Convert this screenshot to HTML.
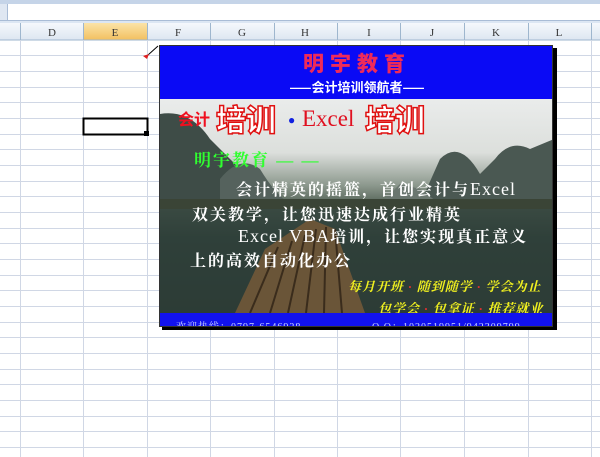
<!DOCTYPE html>
<html><head><meta charset="utf-8"><style>
body{margin:0;width:600px;height:457px;overflow:hidden;background:#fff;font-family:"Liberation Sans","Noto Sans CJK SC",sans-serif;position:relative}
.abs{position:absolute}
.cn{font-family:"Liberation Serif","Noto Serif CJK SC","Noto Sans CJK SC",serif;font-weight:bold;white-space:nowrap}
</style></head><body>
<div class="abs" style="left:0;top:0;width:600px;height:4px;background:#c5d4e8"></div>
<div class="abs" style="left:0;top:4px;width:600px;height:16px;background:#fff;border-bottom:1px solid #a9bcd6"></div>
<div class="abs" style="left:0;top:4px;width:7px;height:16px;background:#dfe7f2;border-right:1px solid #a9bcd6;font-size:8px;color:#555">&nbsp;</div>
<div class="abs" style="left:0;top:21px;width:600px;height:2px;background:#dce6f3"></div>
<svg class="abs" style="left:0;top:0" width="600" height="457">
<defs><linearGradient id="h" x1="0" y1="0" x2="0" y2="1"><stop offset="0" stop-color="#f5f8fc"/><stop offset="1" stop-color="#dde6f1"/></linearGradient>
<linearGradient id="hs" x1="0" y1="0" x2="0" y2="1"><stop offset="0" stop-color="#fbe3a8"/><stop offset="1" stop-color="#f2c060"/></linearGradient></defs>
<rect x="0" y="23" width="600" height="17" fill="url(#h)"/>
<rect x="84" y="23" width="63" height="17" fill="url(#hs)"/>
<line x1="0" y1="40" x2="600" y2="40" stroke="#9eb6ce"/>
<g stroke="#d0d7e5">
<line x1="0" y1="55.5" x2="600" y2="55.5"/><line x1="0" y1="71.5" x2="600" y2="71.5"/><line x1="0" y1="87.5" x2="600" y2="87.5"/><line x1="0" y1="102.5" x2="600" y2="102.5"/><line x1="0" y1="118.5" x2="600" y2="118.5"/><line x1="0" y1="134.5" x2="600" y2="134.5"/><line x1="0" y1="149.5" x2="600" y2="149.5"/><line x1="0" y1="165.5" x2="600" y2="165.5"/><line x1="0" y1="181.5" x2="600" y2="181.5"/><line x1="0" y1="196.5" x2="600" y2="196.5"/><line x1="0" y1="212.5" x2="600" y2="212.5"/><line x1="0" y1="228.5" x2="600" y2="228.5"/><line x1="0" y1="243.5" x2="600" y2="243.5"/><line x1="0" y1="259.5" x2="600" y2="259.5"/><line x1="0" y1="275.5" x2="600" y2="275.5"/><line x1="0" y1="290.5" x2="600" y2="290.5"/><line x1="0" y1="306.5" x2="600" y2="306.5"/><line x1="0" y1="322.5" x2="600" y2="322.5"/><line x1="0" y1="337.5" x2="600" y2="337.5"/><line x1="0" y1="353.5" x2="600" y2="353.5"/><line x1="0" y1="369.5" x2="600" y2="369.5"/><line x1="0" y1="384.5" x2="600" y2="384.5"/><line x1="0" y1="400.5" x2="600" y2="400.5"/><line x1="0" y1="416.5" x2="600" y2="416.5"/><line x1="0" y1="431.5" x2="600" y2="431.5"/><line x1="0" y1="447.5" x2="600" y2="447.5"/>
<line x1="20.5" y1="40" x2="20.5" y2="457"/><line x1="83.5" y1="40" x2="83.5" y2="457"/><line x1="147.5" y1="40" x2="147.5" y2="457"/><line x1="210.5" y1="40" x2="210.5" y2="457"/><line x1="274.5" y1="40" x2="274.5" y2="457"/><line x1="337.5" y1="40" x2="337.5" y2="457"/><line x1="400.5" y1="40" x2="400.5" y2="457"/><line x1="464.5" y1="40" x2="464.5" y2="457"/><line x1="528.5" y1="40" x2="528.5" y2="457"/><line x1="591.5" y1="40" x2="591.5" y2="457"/>
</g>
<g stroke="#9eb6ce">
<line x1="20.5" y1="23" x2="20.5" y2="40"/><line x1="83.5" y1="23" x2="83.5" y2="40"/><line x1="147.5" y1="23" x2="147.5" y2="40"/><line x1="210.5" y1="23" x2="210.5" y2="40"/><line x1="274.5" y1="23" x2="274.5" y2="40"/><line x1="337.5" y1="23" x2="337.5" y2="40"/><line x1="400.5" y1="23" x2="400.5" y2="40"/><line x1="464.5" y1="23" x2="464.5" y2="40"/><line x1="528.5" y1="23" x2="528.5" y2="40"/><line x1="591.5" y1="23" x2="591.5" y2="40"/>
</g>
<g font-family="Liberation Serif" font-size="11" fill="#333" text-anchor="middle">
<text x="52" y="36">D</text><text x="115" y="36">E</text><text x="178" y="36">F</text><text x="242" y="36">G</text><text x="305" y="36">H</text><text x="369" y="36">I</text><text x="432" y="36">J</text><text x="496" y="36">K</text><text x="559" y="36">L</text>
</g>
<rect x="83.5" y="118.5" width="64" height="16" fill="none" stroke="#000" stroke-width="2"/>
<rect x="144" y="131" width="5" height="5" fill="#000"/>
<path d="M148 55 L158 46" stroke="#000" stroke-width="1" fill="none"/>
<path d="M143 56 L149 54 L147 59 Z" fill="#e02020"/>
</svg>
<div class="abs" style="left:162px;top:48px;width:395px;height:282px;background:#000"></div>
<div class="abs" style="left:159px;top:45px;width:394px;height:282px;overflow:hidden;border:1px solid #333;box-sizing:border-box">
<div class="abs" style="left:0;top:0;width:394px;height:53px;background:#0a0af5"></div>
<div class="abs cn" style="left:0;top:2px;width:394px;text-align:center;color:#ee2a5a;font-size:21px;letter-spacing:6px;font-family:'Noto Sans CJK SC',sans-serif;font-weight:900">明宇教育</div>
<div class="abs" style="left:0;top:31px;width:394px;text-align:center;color:#fff;font-size:13px;font-weight:bold;font-family:'Noto Sans CJK SC',sans-serif;white-space:nowrap">——会计培训领航者——</div>
<div class="abs" style="left:0;top:53px;width:394px;height:214px;background:linear-gradient(180deg,#eaeceb 0%,#dcdfdc 25%,#8e9a8f 40%,#4f5e52 50%,#33443c 65%,#2c3a33 100%)"></div>
<svg class="abs" style="left:0;top:53px" width="394" height="214">
<path d="M0 15 Q30 10 50 40 L80 70 Q100 90 120 105 L0 105Z" fill="#3e4c47"/>
<path d="M60 80 Q80 55 100 70 Q115 95 130 105 L60 105Z" fill="#55625d"/>
<path d="M260 105 L280 60 Q300 40 320 75 L335 60 Q350 40 370 50 L394 40 L394 105Z" fill="#4a5852"/>
<path d="M220 105 L240 85 L260 90 L280 105Z" fill="#6a766f"/>
<rect x="0" y="100" width="394" height="10" fill="#3a4436"/>
<path d="M0 110 L394 110 L394 214 L0 214Z" fill="#2d3d39" opacity=".6"/>
<path d="M75 214 L105 150 L150 120 L175 130 L205 214Z" fill="#6a5538"/>
<g stroke="#3a2c1c" stroke-width="2"><line x1="90" y1="214" x2="118" y2="148"/><line x1="110" y1="214" x2="132" y2="142"/><line x1="128" y1="214" x2="145" y2="136"/><line x1="146" y1="214" x2="156" y2="130"/><line x1="164" y1="214" x2="166" y2="128"/><line x1="182" y1="214" x2="175" y2="130"/></g>
</svg>
<div class="abs cn" style="left:18px;top:60px;color:#f01020;font-size:16px;font-family:'Noto Sans CJK SC',sans-serif">会计</div>
<div class="abs cn" style="left:56px;top:50px;color:#fff;-webkit-text-stroke:1.5px #e01010;font-size:30px;font-family:'Noto Sans CJK SC',sans-serif;font-weight:900">培训</div>
<div class="abs" style="left:128px;top:67px;color:#1020e0;font-size:12px">●</div>
<div class="abs" style="left:142px;top:60px;color:#e01020;font-size:23px;font-family:'Liberation Serif',serif">Excel</div>
<div class="abs cn" style="left:205px;top:50px;color:#fff;-webkit-text-stroke:1.5px #e01010;font-size:30px;font-family:'Noto Sans CJK SC',sans-serif;font-weight:900">培训</div>
<div class="abs cn" style="left:34px;top:100px;color:#30ff30;font-size:17px;letter-spacing:2px">明宇教育 — —</div>
<div class="abs cn" style="left:76px;top:131px;color:#fff;font-size:16px;letter-spacing:2px">会计精英的摇篮，首创会计与<span style="font-weight:normal;font-size:18px;letter-spacing:1px">Excel</span></div>
<div class="abs cn" style="left:32px;top:156px;color:#fff;font-size:16px;letter-spacing:2px">双关教学，让您迅速达成行业精英</div>
<div class="abs cn" style="left:78px;top:178px;color:#fff;font-size:16px;letter-spacing:2px"><span style="font-weight:normal;font-size:18px;letter-spacing:1px">Excel VBA</span>培训，让您实现真正意义</div>
<div class="abs cn" style="left:30px;top:202px;color:#fff;font-size:16px;letter-spacing:2px">上的高效自动化办公</div>
<div class="abs cn" style="left:188px;top:230px;color:#f0f020;font-size:13px;font-style:italic;letter-spacing:1px">每月开班<span style="color:#e03030"> · </span>随到随学<span style="color:#e03030"> · </span>学会为止</div>
<div class="abs cn" style="left:218px;top:252px;color:#f0f020;font-size:13px;font-style:italic;letter-spacing:1px">包学会<span style="color:#e03030"> · </span>包拿证<span style="color:#e03030"> · </span>推荐就业</div>
<div class="abs" style="left:0;top:267px;width:394px;height:15px;background:#1212ee"></div>
<div class="abs" style="left:16px;top:272px;color:#cfd8ff;font-size:10px;font-family:'Liberation Serif','Noto Serif CJK SC',serif;white-space:nowrap;letter-spacing:1px">欢迎热线：0797-6546928</div>
<div class="abs" style="left:212px;top:272px;color:#cfd8ff;font-size:10px;font-family:'Liberation Serif','Noto Serif CJK SC',serif;white-space:nowrap;letter-spacing:1px">Q Q：1020519951/942309799</div>
</div>
</body></html>
